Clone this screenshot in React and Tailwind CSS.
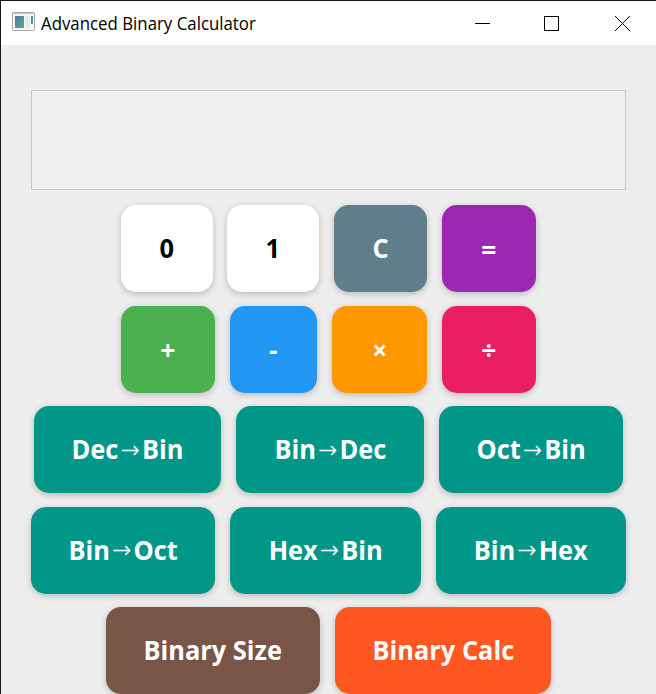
const rows = [
  {
    gap: 'ml-[120px]',
    keys: [
      { label: '0', box: 'w-[92px] bg-white text-black' },
      { label: '1', box: 'ml-[14px] w-[92px] bg-white text-black' },
      { label: 'C', box: 'ml-[15px] w-[93px] bg-[#607d8b] text-white' },
      { label: '=', symbol: true, box: 'ml-[15px] w-[94px] bg-[#9c27b0] text-white' },
    ],
  },
  {
    gap: 'ml-[120px]',
    keys: [
      { label: '+', symbol: true, box: 'w-[94.25px] bg-[#4caf50] text-white' },
      { label: '-', symbol: true, box: 'ml-[14.75px] w-[87px] bg-[#2196f3] text-white' },
      { label: '×', symbol: true, box: 'ml-[15px] w-[95px] bg-[#ff9800] text-white' },
      { label: '÷', symbol: true, box: 'ml-[15px] w-[94px] bg-[#e91e63] text-white' },
    ],
  },
  {
    gap: 'ml-[33px]',
    keys: [
      { from: 'Dec', to: 'Bin', box: 'w-[187.25px] bg-[#009688] text-white' },
      { from: 'Bin', to: 'Dec', box: 'ml-[14.75px] w-[188px] bg-[#009688] text-white' },
      { from: 'Oct', to: 'Bin', box: 'ml-[15px] w-[184px] bg-[#009688] text-white' },
    ],
  },
  {
    gap: 'ml-[30px]',
    keys: [
      { from: 'Bin', to: 'Oct', box: 'w-[184.25px] bg-[#009688] text-white' },
      { from: 'Hex', to: 'Bin', box: 'ml-[14.75px] w-[191px] bg-[#009688] text-white' },
      { from: 'Bin', to: 'Hex', box: 'ml-[15px] w-[190px] bg-[#009688] text-white' },
    ],
  },
  {
    gap: 'ml-[105px]',
    keys: [
      { label: 'Binary Size', box: 'w-[214.25px] bg-[#795548] text-white' },
      { label: 'Binary Calc', box: 'ml-[14.75px] w-[216px] bg-[#ff5722] text-white' },
    ],
  },
];

function Key({ item }) {
  return (
    <button
      className={
        'flex h-[87px] shrink-0 items-center justify-center whitespace-pre rounded-[15px] pb-[2px] text-[27px] font-bold leading-none shadow-[0_2px_6px_rgba(0,0,0,0.22)] ' +
        item.box
      }
    >
      {item.label ? (
        <span className={item.symbol ? 'scale-x-[0.98] pt-[3px]' : 'scale-x-[0.94]'}>{item.label}</span>
      ) : (
        <span className="flex scale-x-[0.94] items-center">
          <span>{item.from}</span>
          <span className="w-[25px] pt-[2px] text-center font-['DejaVu_Sans'] text-[24px] font-extralight [-webkit-text-stroke:0.3px_white]">→</span>
          <span>{item.to}</span>
        </span>
      )}
    </button>
  );
}

function AppIcon() {
  return (
    <svg width="23" height="19" viewBox="0 0 23 19" className="mb-[3px] shrink-0">
      <defs>
        <linearGradient id="pane" x1="0" y1="0" x2="1" y2="1">
          <stop offset="0" stopColor="#4c79a6" />
          <stop offset="1" stopColor="#5dac86" />
        </linearGradient>
      </defs>
      <rect x="0.5" y="0.5" width="22" height="18" rx="1" fill="#f6f6f7" stroke="#a5a9ad" />
      <path d="M1 1.5H22" stroke="#c5c9cd" />
      <rect x="3" y="4" width="9" height="12" fill="url(#pane)" />
      <rect x="13" y="4" width="5" height="12" fill="#e9eaec" />
      <rect x="19" y="4" width="2" height="8" fill="url(#pane)" />
    </svg>
  );
}

export default function App() {
  return (
    <div className="flex h-[694px] w-[656px] flex-col overflow-hidden border-l border-t border-[#17151a] bg-[#ededed] font-['Open_Sans','Noto_Sans',sans-serif]">
      <header className="flex h-[44px] shrink-0 items-center bg-white pl-[11px]">
        <AppIcon />
        <h1 className="ml-[6px] w-[216px] origin-left scale-x-[0.935] whitespace-nowrap pt-px text-[18px] text-black">Advanced Binary Calculator</h1>
        <div className="ml-auto flex pr-[25px]">
          <svg width="156" height="16" viewBox="0 0 156 16" fill="none" stroke="#000">
            <path d="M0 8.5H15" />
            <rect x="69.5" y="1.5" width="14" height="14" />
            <path d="M140 1L155 16M155 1L140 16" />
          </svg>
        </div>
      </header>
      <main className="flex flex-col">
        <div className="ml-[30px] mt-[45px] h-[100px] w-[595px] shrink-0 border border-[#c8c8c8] bg-[#efefef]" />
        <div className="mt-[15.25px] flex flex-col gap-[13.5px]">
          {rows.map((row, i) => (
            <div key={i} className={'flex ' + row.gap}>
              {row.keys.map((item, j) => (
                <Key key={j} item={item} />
              ))}
            </div>
          ))}
        </div>
      </main>
    </div>
  );
}
